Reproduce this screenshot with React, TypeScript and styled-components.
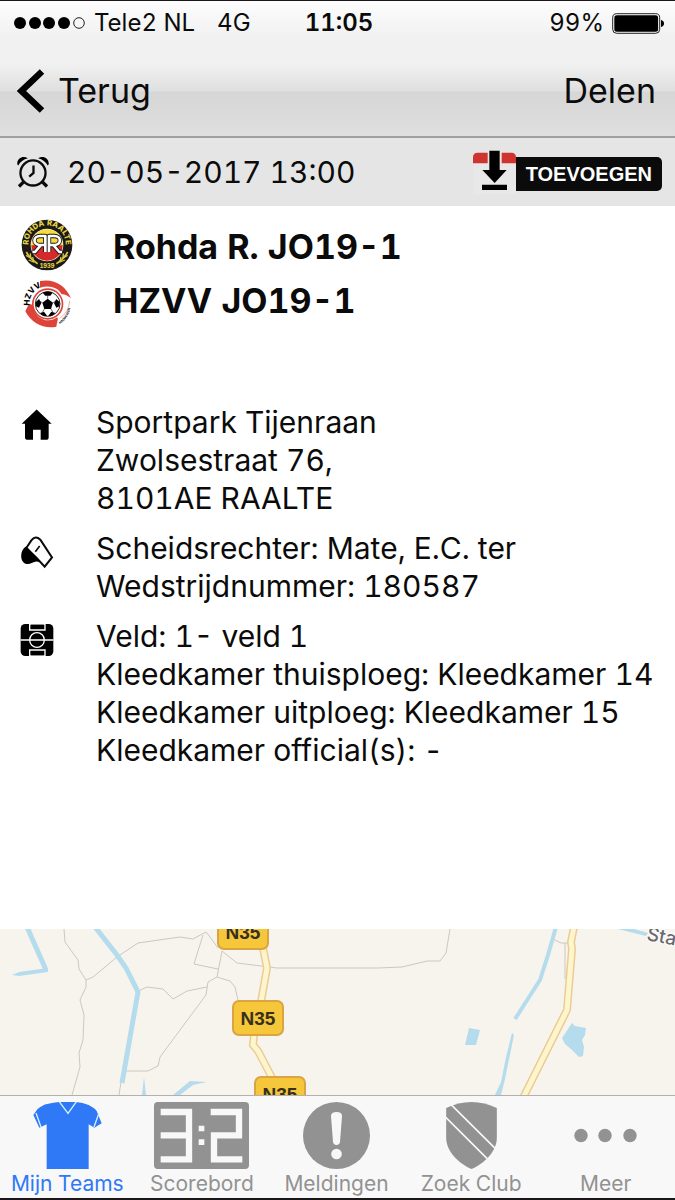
import React from 'react';
import styled, { createGlobalStyle } from 'styled-components';

const colors = {
  ink: '#0b0b0b',
  blue: '#2f78f6',
  gray: '#929292',
  red: '#d0342f',
  water: '#b5dcec',
  path: '#cbc8c2',
  casing: '#eccb94',
  road: '#fdf6cd',
};

const GlobalStyle = createGlobalStyle`
  * {
    box-sizing: border-box;
  }

  body {
    margin: 0;
    background: #fff;
    color: ${colors.ink};
    font-family: Inter, 'Liberation Sans', sans-serif;
    font-variant-numeric: tabular-nums;
  }

  a,
  button {
    color: inherit;
    font: inherit;
    text-decoration: none;
  }

  svg {
    display: block;
  }
`;

const Page = styled.div`
  display: flex;
  flex-direction: column;
  min-height: 100vh;
  border-top: 1px solid #1a161a;
  border-bottom: 2px solid #1a161a;
`;

const Header = styled.header`
  border-bottom: 2px solid #a0a0a0;
  background: linear-gradient(
    #fdfdfd 0,
    #f1f1f1 36px,
    #f0f0f0 64px,
    #dfdfdf 90px,
    #d6d6d6 91px,
    #dfdfdf 100%
  );
`;

const StatusBar = styled.div`
  display: grid;
  grid-template-columns: 1fr auto 1fr;
  align-items: center;
  height: 44px;
  padding: 0 11px 0 14px;
  font-size: 24px;
  line-height: 30px;
`;

const StatusGroup = styled.div<{ $end?: boolean }>`
  display: flex;
  align-items: center;
  justify-content: ${p => (p.$end ? 'flex-end' : 'flex-start')};
  gap: 8px;
`;

const Network = styled.span`
  margin-left: 14px;
`;

const Time = styled.time`
  font-weight: 600;
`;

const NavBar = styled.nav`
  display: flex;
  align-items: center;
  justify-content: space-between;
  height: 91px;
  padding: 0 19px 0 17px;
  font-size: 34px;
  line-height: 40px;
`;

const BackLink = styled.a`
  display: flex;
  align-items: center;
  gap: 13px;
`;

const PlainButton = styled.button`
  padding: 0;
  border: 0;
  background: none;
  cursor: pointer;
`;

const DateBar = styled.div`
  display: flex;
  align-items: center;
  gap: 18px;
  height: 68px;
  padding: 0 13px 0 17px;
  background: #e5e5e5;
  font-size: 30px;
  line-height: 38px;
`;

const AddButton = styled(PlainButton)`
  display: flex;
  align-items: center;
  margin-left: auto;
`;

const AddLabel = styled.span`
  margin-top: 4px;
  padding: 0 10px;
  border-radius: 0 5px 5px 0;
  background: ${colors.ink};
  color: #fff;
  font: bold 20px/34px 'Liberation Sans', Arial, sans-serif;
`;

const Teams = styled.ul`
  margin: 0;
  padding: 13px 20px 78px 21px;
  list-style: none;
`;

const Team = styled.li`
  display: grid;
  grid-template-columns: 52px 1fr;
  align-items: center;
  gap: 40px;
  height: 53px;
  font-size: 34px;
  font-weight: 700;
`;

const Details = styled.div`
  display: flex;
  flex: 1;
  flex-direction: column;
  gap: 12px;
  padding: 0 0 40px 20px;
`;

const Detail = styled.section`
  display: grid;
  grid-template-columns: 34px 1fr;
  gap: 42px;
  font-size: 30px;
  line-height: 38px;

  svg {
    margin-top: 6px;
  }

  p {
    margin: 0;
  }
`;

const MapSvg = styled.svg`
  width: 100%;
  height: 166px;
  background: #f7f4ee;
`;

const TabBar = styled.nav`
  display: grid;
  grid-template-columns: repeat(5, 1fr);
  height: 103px;
  padding-right: 2px;
  border-top: 1px solid #b5b0ac;
  background: #f8f8f8;
`;

const Tab = styled.a<{ $active?: boolean }>`
  display: flex;
  flex-direction: column;
  align-items: center;
  padding-top: 6px;
  color: ${p => (p.$active ? colors.blue : colors.gray)};
  font-size: 21px;
  line-height: 30px;
`;

const SignalIcon = () => (
  <svg width="72" height="14" viewBox="0 0 72 14">
    {[6, 21, 35, 50].map(x => (
      <circle key={x} cx={x} cy="7" r="6" />
    ))}
    <circle cx="65" cy="7" r="5.3" fill="none" stroke="#222" />
  </svg>
);

const BatteryIcon = () => (
  <svg width="52" height="21" viewBox="0 0 52 21">
    <rect x="0.7" y="0.7" width="47" height="19.6" rx="4" fill="none" stroke="#222" />
    <rect x="2.3" y="2.3" width="43.8" height="16.4" rx="2.5" />
    <path d="M49 7q3 .6 3 3.500t-3 3.500z" />
  </svg>
);

const BackIcon = () => (
  <svg width="28" height="44" viewBox="0 0 28 44">
    <path d="M25 2.500 4.500 22 25 41.500" fill="none" stroke="#000" strokeWidth="6.500" />
  </svg>
);

const AlarmIcon = () => (
  <svg width="32" height="32" viewBox="0 0 97 96">
    <path d="M1 25C-1 6 18-3 33 6 20 9 9 17 4 28zM96 25C98 6 79-3 64 6c13 3 24 11 29 22z" />
    <g fill="none" stroke="#0b0b0b" strokeWidth="7">
      <circle cx="48.500" cy="51" r="38" />
      <path d="M50 28v23L37 62" strokeWidth="7" />
      <path d="M21 77 6 92M76 77l15 15" strokeWidth="10" />
    </g>
  </svg>
);

const DownloadIcon = () => (
  <svg width="43" height="44" viewBox="0 0 129 132">
    <path d="M2 38h127v94H2z" fill="#e8e8e8" />
    <path d="M0 40V22Q0 8 14 8h101q14 0 14 14v18z" fill={colors.red} />
    <path d="M44 2h42v42H44z" fill="#f0e6e6" />
    <path d="M49 2h31v58h21L65 99 28 60h21zM27 104h75v16H27z" />
  </svg>
);

const RohdaLogo = () => (
  <svg width="52" height="54" viewBox="0 0 156 162">
    <defs>
      <path id="rohda-arc" d="M24 90A56 56 0 1 1 132 90" />
      <clipPath id="rohda-inner">
        <circle cx="78" cy="78" r="47" />
      </clipPath>
    </defs>
    <circle cx="78" cy="78" r="76" fill="#1d1916" />
    <circle cx="78" cy="78" r="49" fill="#f3efdb" />
    <g clipPath="url(#rohda-inner)">
      <path d="M30 30h96v52H30z" fill="#f6db3d" />
      <path d="M30 79h96v50H30z" fill="#d42a2a" />
    </g>
    <text fontSize="23" fontWeight="800" fill="#e3d447" textAnchor="middle">
      <textPath href="#rohda-arc" startOffset="50%">
        ROHDA RAALTE
      </textPath>
    </text>
    <g fill="none" strokeLinejoin="round">
      <path
        d="M84 99V51h16c22 0 22 27 0 27H86m12 1 17 20h8M73 99V51H57c-22 0-22 27 0 27h14m-12 1L42 99h-7"
        stroke="#1d1916"
        strokeWidth="13"
      />
      <path
        d="M84 99V51h16c22 0 22 27 0 27H86m12 1 17 20h8M73 99V51H57c-22 0-22 27 0 27h14m-12 1L42 99h-7"
        stroke="#fff"
        strokeWidth="8"
      />
      <path d="M16 99q12 22 34 35M140 99q-12 22-34 35" stroke="#d9c640" strokeWidth="5" />
      <path
        d="m15 109 14 8-1-14m-5 20 15 6-3-15m105-5-14 8 1-14m5 20-15 6 3-15"
        stroke="#d9c640"
        strokeWidth="4"
      />
    </g>
    <text x="78" y="147" fontSize="17" fontWeight="800" fill="#e3d447" textAnchor="middle">
      1939
    </text>
  </svg>
);

const HzvvLogo = () => (
  <svg width="52" height="56" viewBox="0 -24 156 168">
    <defs>
      <path id="hzvv-arc" d="M28 86A54 54 0 0 1 70 18" />
      <path id="hzvv-slogan" d="M117 132A74 74 0 0 0 149 66" />
    </defs>
    <path
      d="M57 3c42-8 77 13 93 52-11-10-21-13-28-12C111 21 84 14 57 23z"
      fill="#dd4338"
    />
    <path
      d="M13 94c8-17 11-27 23-17 1 34 43 58 73 35 4 4-2 17-3 28-36 7-73-8-93-46z"
      fill="#dd4338"
    />
    <circle cx="80" cy="72" r="47" fill="#dd4338" />
    <circle cx="80" cy="72" r="42" fill="#fff" />
    <circle cx="80" cy="72" r="37" fill="#fff" stroke="#222" strokeWidth="3" />
    <path d="m80 56 16 12-6 19H70l-6-19z" />
    <path d="M65 38q15-7 30 0l-7 9H73zM44 67l10-10 7 12-7 14-9-4zM116 67l-10-10-7 12 7 14 9-4zM57 99l12-4 9 12-7 2q-9-4-14-10zM103 99l-12-4-9 12 7 2q9-4 14-10z" />
    <path
      d="M80 56V45M96 68l8-4M90 87l6 10M70 87l-6 10M64 68l-8-4"
      stroke="#222"
      strokeWidth="2"
    />
    <path d="M116 115q28-18 30-53" fill="none" stroke="#e78b82" strokeWidth="2" />
    <text fontSize="24" fontWeight="800" textAnchor="middle">
      <textPath href="#hzvv-arc" startOffset="50%">
        HZVV
      </textPath>
    </text>
    <text fontSize="9" fontWeight="700">
      <textPath href="#hzvv-slogan">HOOGEVEEN</textPath>
    </text>
  </svg>
);

const HouseIcon = () => (
  <svg width="34" height="31" viewBox="0 0 102 92">
    <path d="M50 1 95 44H86v40q0 8-8 8H62V62H39v30H24q-9 0-9-8V44H5z" />
  </svg>
);

const WhistleIcon = () => (
  <svg width="34" height="34" viewBox="0 0 102 102">
    <path
      d="M19 39 34 16Q46 0 61 14L96 67 74 95 50 69z"
      fill="#fff"
      stroke="#0b0b0b"
      strokeWidth="6"
    />
    <path d="M19 34C-3 46-2 88 25 87c11 0 15-9 28-7l8 1z" />
    <path d="m46 50 13-17" stroke="#0b0b0b" strokeWidth="5" />
  </svg>
);

const FieldIcon = () => (
  <svg width="34" height="34" viewBox="0 0 102 102">
    <rect x="2" y="3" width="98" height="96" rx="14" />
    <g fill="none" stroke="#fff" strokeWidth="4">
      <path d="M2 51h98M29 3v18h46V3M29 99V81h46v18" />
      <circle cx="51" cy="51" r="22" />
    </g>
    <path d="M29 0h46v5H29zM29 97h46v5H29z" fill="#fff" />
    <path d="M33 5h38v12H33zM33 85h38v12H33z" />
  </svg>
);

const ShirtIcon = () => (
  <svg width="69" height="67" viewBox="0 0 205 201">
    <path
      d="M78 0h50q20 2 38 9 20 11 24 18l15 37-22 13-17-10v134H40V67L18 77 0 39l12-17Q28 8 42 6 60 1 78 0z"
      fill="currentColor"
    />
    <path
      d="m77-2 27 36 26-36M8 33l15 42M197 33l-15 42"
      fill="none"
      stroke="#d6f0ff"
      strokeWidth="4"
    />
  </svg>
);

const ScoreIcon = () => (
  <svg width="95" height="67" viewBox="0 0 285 201">
    <rect width="285" height="201" rx="11" fill="currentColor" />
    <path
      d="M20 30h85v142H20M20 100h85M170 30h85v70h-75v72h85"
      fill="none"
      stroke="#f8f8f8"
      strokeWidth="19"
    />
    <path d="M134 71h17v17h-17zM134 112h17v17h-17z" fill="#f8f8f8" />
  </svg>
);

const AlertIcon = () => (
  <svg width="67" height="67" viewBox="0 0 67 67">
    <circle cx="33.500" cy="33.500" r="33.500" fill="currentColor" />
    <path d="M28 14q0-4 5.500-4t5.500 4l-2 26q-.5 3-3.500 3T30 40z" fill="#f8f8f8" />
    <circle cx="33.500" cy="52" r="5.300" fill="#f8f8f8" />
  </svg>
);

const ShieldIcon = () => (
  <svg width="51" height="67" viewBox="0 0 152 201">
    <path
      d="M0 18Q36 0 76 0t76 18v89c0 42-38 77-76 94C38 184 0 149 0 107z"
      fill="currentColor"
    />
    <path d="m14 7 133 132M-2 45l125 125" stroke="#f8f8f8" strokeWidth="5" />
  </svg>
);

const MoreIcon = () => (
  <svg width="63" height="67" viewBox="0 0 63 67">
    {[7, 31, 56].map(x => (
      <circle key={x} cx={x} cy="33.500" r="6.700" fill="currentColor" />
    ))}
  </svg>
);

const RoadSign = ({ x, y }: { x: number; y: number }) => (
  <g transform={`translate(${x} ${y})`}>
    <rect
      x="-25"
      y="-17"
      width="50"
      height="34"
      rx="6"
      fill="#f6c73b"
      stroke="#d9a441"
      strokeWidth="2"
    />
    <text
      y="7"
      textAnchor="middle"
      fontFamily="'Liberation Sans', Arial, sans-serif"
      fontSize="19"
      fontWeight="700"
      fill="#37301c"
    >
      N35
    </text>
  </g>
);

const n35 = 'M262 14l5 25-6 34-3 18-4 15-1 10 5 6 20 38';
const eastRoad = 'M574-2l-3 15 1 7-5 61-44 88';

const VenueMap = () => (
  <MapSvg viewBox="0 0 675 166" preserveAspectRatio="xMidYMid slice" role="img">
    <g fill="none" stroke={colors.path}>
      <path d="M64 0l1 13 13 18 1 9 7 11v7l-6 13 4 15-1 25-4 13 1 14-8 28" />
      <path d="M86 51l7-3 24-20 21-14 42-6 13 2 13-7 4 5 8 11" />
      <path d="M203 6l-9 29 24 5M222 22l-5 26-9 5-2 13-46 62-2 9-10 5h-22" />
      <path d="M222 22l15 12 40 5h101l24-1 25-6h13l6-8 4-24" />
      <path d="M217 48l13 4 5 6 3 13M138 62l9-4 16 2 10 10 14-8 20-4M121 153l-2 13" />
      <path d="M553 10l8 4h9M565 14v36" />
    </g>
    <g fill="none" stroke={colors.water} strokeWidth="5">
      <path d="M95-2l22 28 9 13 12 24-16 91" />
      <path d="M27-2l19 43" />
      <path d="M556-2l-8 28-8 25-25 39" strokeWidth="4" />
    </g>
    <path
      d="M12 46l7-3 29-4v4l-29 4zM144 148l2 18h-4zM173 166l17-14 17 1-14 3-13 10zM512 104l2 2-9 44-4 16h-6l6-13 5-25zM469 99l11 2-4 15h-11zM572 94l3 3 11 2-1 7-3 5 2 7-1 9-4 1-7-7-7-6-3-6zM618 0h16l14 4-2 3z"
      fill={colors.water}
    />
    {[n35, eastRoad].map(d => (
      <g key={d} fill="none">
        <path d={d} stroke={colors.casing} strokeWidth="8" />
        <path d={d} stroke={colors.road} strokeWidth="5" />
      </g>
    ))}
    <text
      transform="translate(646 11) rotate(11)"
      fontSize="19"
      fontWeight="500"
      fill="#6b696e"
      stroke="#fff"
      strokeWidth="2"
      paintOrder="stroke"
    >
      Sta
    </text>
    <RoadSign x={243} y={3} />
    <RoadSign x={258} y={89} />
    <RoadSign x={280} y={165} />
  </MapSvg>
);

const teams = [
  { name: 'Rohda R. JO19-1', logo: <RohdaLogo /> },
  { name: 'HZVV JO19-1', logo: <HzvvLogo /> },
];

const details = [
  {
    icon: <HouseIcon />,
    lines: ['Sportpark Tijenraan', 'Zwolsestraat 76,', '8101AE RAALTE'],
  },
  {
    icon: <WhistleIcon />,
    lines: ['Scheidsrechter: Mate, E.C. ter', 'Wedstrijdnummer: 180587'],
  },
  {
    icon: <FieldIcon />,
    lines: [
      'Veld: 1- veld 1',
      'Kleedkamer thuisploeg: Kleedkamer 14',
      'Kleedkamer uitploeg: Kleedkamer 15',
      'Kleedkamer official(s): -',
    ],
  },
];

const tabs = [
  { label: 'Mijn Teams', icon: <ShirtIcon />, active: true },
  { label: 'Scorebord', icon: <ScoreIcon /> },
  { label: 'Meldingen', icon: <AlertIcon /> },
  { label: 'Zoek Club', icon: <ShieldIcon /> },
  { label: 'Meer', icon: <MoreIcon /> },
];

const App = () => (
  <>
    <GlobalStyle />
    <Page>
      <Header>
        <StatusBar>
          <StatusGroup>
            <SignalIcon />
            <span>Tele2 NL</span>
            <Network>4G</Network>
          </StatusGroup>
          <Time>11:05</Time>
          <StatusGroup $end>
            <span>99%</span>
            <BatteryIcon />
          </StatusGroup>
        </StatusBar>
        <NavBar>
          <BackLink href="#terug">
            <BackIcon />
            Terug
          </BackLink>
          <PlainButton type="button">Delen</PlainButton>
        </NavBar>
      </Header>
      <DateBar>
        <AlarmIcon />
        <time dateTime="2017-05-20T13:00">20-05-2017 13:00</time>
        <AddButton type="button">
          <DownloadIcon />
          <AddLabel>TOEVOEGEN</AddLabel>
        </AddButton>
      </DateBar>
      <Teams>
        {teams.map(({ name, logo }) => (
          <Team key={name}>
            {logo}
            <span>{name}</span>
          </Team>
        ))}
      </Teams>
      <Details>
        {details.map(({ icon, lines }) => (
          <Detail key={lines[0]}>
            {icon}
            <div>
              {lines.map(line => (
                <p key={line}>{line}</p>
              ))}
            </div>
          </Detail>
        ))}
      </Details>
      <VenueMap />
      <TabBar>
        {tabs.map(({ label, icon, active }) => (
          <Tab key={label} href={`#${label}`} $active={active}>
            {icon}
            {label}
          </Tab>
        ))}
      </TabBar>
    </Page>
  </>
);

export default App;
